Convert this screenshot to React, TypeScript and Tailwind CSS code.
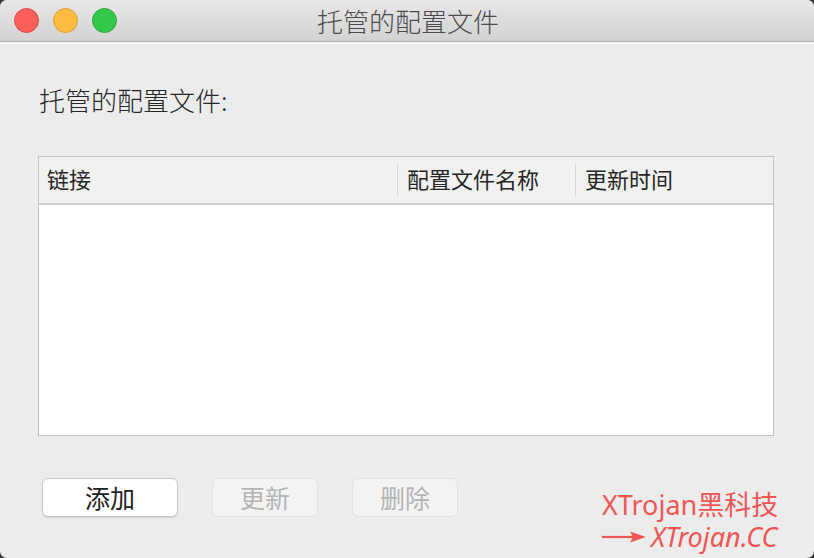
const cjk = { fontFamily: '"Noto Sans CJK SC", "Noto Sans", sans-serif' };

function Light({ color, ring }: { color: string; ring: string }) {
  return <div className={`w-[25px] h-[25px] rounded-full border ${color} ${ring}`} />;
}

export default function App() {
  return (
    <div className="w-[814px] h-[558px] bg-[#3a3a3a]" style={cjk}>
      <div className="relative w-full h-full bg-[#ececec] rounded-[7px] overflow-hidden flex flex-col">
        {/* Title bar */}
        <div className="relative h-[42px] shrink-0 bg-gradient-to-b from-[#e9e7e9] to-[#d2d2d2] border-b border-[#b4b4b4] flex items-center">
          <div className="flex items-center gap-[14px] pl-[14px]">
            <Light color="bg-[#fc605c]" ring="border-[#de4a46]" />
            <Light color="bg-[#fdbc40]" ring="border-[#dea034]" />
            <Light color="bg-[#34c84a]" ring="border-[#27aa35]" />
          </div>
          <div className="absolute inset-0 flex items-center justify-center text-[26px] font-light text-[#4b4b4b] pl-[2px]">
            托管的配置文件
          </div>
        </div>
        <div className="h-[2px] bg-[#f6f6f6]" />

        {/* Content */}
        <div className="flex flex-col px-[38px]">
          <div className="mt-[41px] text-[26px] leading-[30px] font-light text-[#262626] pl-[1px]">托管的配置文件:</div>

          <div className="mt-[41px] w-[736px] h-[280px] border border-[#c3c3c3] bg-white flex flex-col">
            <div className="h-[48px] shrink-0 bg-[#f1f1f1] border-b-2 border-[#cfcfcf] flex items-center text-[22px] text-[#262626]">
              <div className="w-[358px] pl-[8px] pb-[3px] h-full flex items-center">链接</div>
              <div className="w-px h-[32px] bg-[#d6d6d6]" />
              <div className="w-[177px] pl-[9px] pb-[3px] h-full flex items-center">配置文件名称</div>
              <div className="w-px h-[32px] bg-[#d6d6d6]" />
              <div className="flex-1 pl-[9px] pb-[3px] h-full flex items-center">更新时间</div>
            </div>
            <div className="flex-1 bg-white" />
          </div>

          <div className="mt-[42px] ml-[4px] flex gap-[34px]">
            <button className="w-[136px] h-[39px] rounded-[6px] bg-white border border-[#c8c8c8] shadow-[0_1px_1px_rgba(0,0,0,0.12)] text-[25px] leading-none text-[#222]">
              添加
            </button>
            <button className="w-[106px] h-[39px] rounded-[6px] bg-[#f3f3f3] border border-[#e0e0e0] text-[25px] leading-none text-[#b4b4b4]">
              更新
            </button>
            <button className="w-[106px] h-[39px] rounded-[6px] bg-[#f3f3f3] border border-[#e0e0e0] text-[25px] leading-none text-[#b4b4b4]">
              删除
            </button>
          </div>
        </div>

        {/* Watermark */}
        <div className="absolute left-[602px] top-[490px] text-[#ef5757] leading-none">
          <div className="text-[27px] leading-[30px]" style={{ fontFamily: '"Noto Sans", "Noto Sans CJK SC", sans-serif' }}>
            XTrojan黑科技
          </div>
          <div className="flex items-center gap-[5px] mt-[2px]">
            <svg width="44" height="14" viewBox="0 0 44 14">
              <line x1="0" y1="7" x2="32" y2="7" stroke="#ef5757" strokeWidth="2.2" />
              <path d="M28 1.5 L44 7 L28 12.5 L31 7 Z" fill="#ef5757" />
            </svg>
            <span className="italic text-[27px] leading-[30px]" style={{ fontFamily: '"Noto Sans", sans-serif' }}>
              XTrojan.CC
            </span>
          </div>
        </div>
      </div>
    </div>
  );
}
